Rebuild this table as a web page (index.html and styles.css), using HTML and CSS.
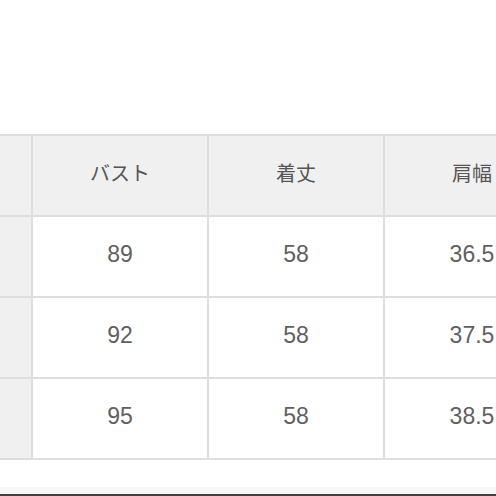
FILE: index.html
```html
<!DOCTYPE html>
<html lang="ja">
<head>
<meta charset="utf-8">
<link rel="stylesheet" href="styles.css">
</head>
<body>
<div class="page">
  <div class="size-table">
    <div class="cell head"></div>
    <div class="cell head jp">バスト</div>
    <div class="cell head jp">着丈</div>
    <div class="cell head jp">肩幅</div>
    <div class="cell head"></div>
    <div class="cell">89</div>
    <div class="cell">58</div>
    <div class="cell">36.5</div>
    <div class="cell head"></div>
    <div class="cell">92</div>
    <div class="cell">58</div>
    <div class="cell">37.5</div>
    <div class="cell head"></div>
    <div class="cell">95</div>
    <div class="cell">58</div>
    <div class="cell">38.5</div>
  </div>
  <div class="bottom-band"></div>
  <div class="bottom-bar"></div>
</div>
</body>
</html>
```

FILE: styles.css
```css
html, body {
  margin: 0;
  padding: 0;
  background: #ffffff;
}
.page {
  width: 496px;
  height: 496px;
  overflow: hidden;
  display: flex;
  flex-direction: column;
  padding-top: 134px;
  box-sizing: border-box;
}
.size-table {
  flex: none;
  display: grid;
  grid-template-columns: repeat(4, 174px);
  grid-auto-rows: 79px;
  gap: 2px;
  padding: 2px;
  width: max-content;
  margin-left: -145px;
  background: #dedede;
}
.cell {
  background: #ffffff;
  display: flex;
  align-items: center;
  justify-content: center;
  font-family: "Liberation Sans", Arial, sans-serif;
  font-size: 23px;
  color: #606060;
  padding-bottom: 5px;
  box-sizing: border-box;
}
.cell.head {
  background: #f0f0f0;
}
.cell.jp {
  font-family: "Noto Sans CJK JP", sans-serif;
  font-size: 20px;
  font-weight: 400;
  color: #555555;
  padding-bottom: 6px;
}
.bottom-band {
  flex: none;
  margin-top: 27px;
  height: 7px;
  background: #f7f7f7;
}
.bottom-bar {
  flex: none;
  height: 2px;
  background: #404040;
}
```
